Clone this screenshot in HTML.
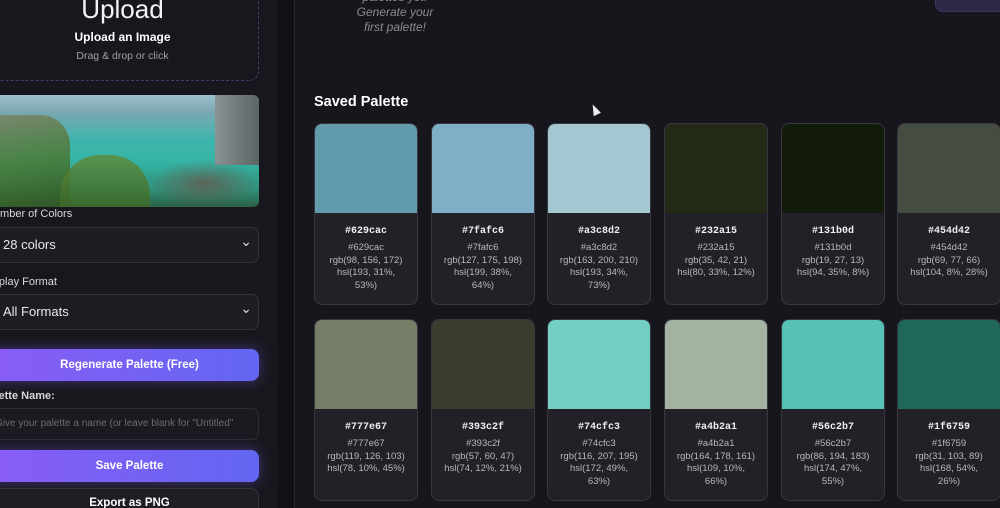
<!DOCTYPE html>
<html style="width:1000px;height:508px;overflow:hidden"><head><meta charset="utf-8"><style>
*{box-sizing:border-box;margin:0;padding:0}
body{width:1000px;height:508px;overflow:hidden;background:#17161c;font-family:"Liberation Sans",sans-serif;color:#fff;position:relative}
.a{position:absolute}
.left{left:0;top:0;width:278px;height:508px;background:#18171d}
.strip{left:278px;top:0;width:17px;height:508px;background:#111014;border-right:1px solid #26252c}
.up{left:-20px;top:-20px;width:279px;height:101px;border:1.5px dashed #4a3a6a;border-radius:10px}
.sel{left:-20px;width:279px;height:36px;background:#1e1d24;border:1px solid #34333b;border-radius:7px;font-size:13px;color:#e8e8ec;padding-left:22px;line-height:34px}
.sel:after{content:"⌄";position:absolute;right:6px;top:-4px;font-size:14px;color:#ddd}
.lbl{font-size:11px;color:#d8d8dc;left:-14px}
.btn{left:-20px;width:279px;height:32px;border-radius:8px;background:linear-gradient(90deg,#8b5cf6,#6366f1);font-size:11.5px;font-weight:bold;text-align:center;line-height:32px;padding-left:20px;box-shadow:0 0 14px rgba(120,90,240,.45)}
.card{width:104px;height:182px;border:1px solid #38373f;border-radius:8px;background:#222127;overflow:hidden;text-align:center}
.sw{height:89px}
.hx{font-family:"Liberation Mono",monospace;font-weight:bold;font-size:10px;margin-top:13px;color:#f0f0f0}
.dt{font-size:9.5px;color:#b8b8bc;line-height:12.5px;margin-top:5px;padding:0 6px}
</style></head><body>
<div class="a left"></div>
<div class="a strip"></div>
<div class="a up"></div>
<div class="a" style="left:0;width:245px;text-align:center;top:-6px;font-size:26px;color:#f4f4f6">Upload</div>
<div class="a" style="left:0;width:245px;text-align:center;top:30px;font-size:12px;font-weight:bold">Upload an Image</div>
<div class="a" style="left:0;width:245px;text-align:center;top:50px;font-size:10.5px;color:#a0a0a8">Drag &amp; drop or click</div>
<div class="a" style="left:0;top:95px;width:259px;height:112px;border-radius:0 6px 6px 0;overflow:hidden;background:linear-gradient(180deg,#9cc0cc 0%,#7aa7b2 15%,#3fb5ad 40%,#35b3a4 60%,#2f8f78 85%,#2c6046 100%)">
<div class="a" style="left:0;top:20px;width:70px;height:92px;background:linear-gradient(170deg,#7a8060,#4a7a34 50%,#2e5420);border-radius:0 30px 0 0;opacity:.85"></div>
<div class="a" style="left:60px;top:60px;width:90px;height:52px;background:linear-gradient(180deg,#5f8a3a,#3d6a28);border-radius:40px 40px 0 0;opacity:.8"></div>
<div class="a" style="left:215px;top:0;width:44px;height:70px;background:linear-gradient(90deg,#8a9496,#5a6464)"></div>
<div class="a" style="left:150px;top:65px;width:109px;height:47px;background:radial-gradient(ellipse at 50% 50%,rgba(110,80,70,.7) 0%,rgba(40,120,100,0) 70%)"></div>
</div>
<div class="a lbl" style="top:208px">Number of Colors</div>
<div class="a sel" style="top:227px">28 colors</div>
<div class="a lbl" style="top:276px;left:-17px">Display Format</div>
<div class="a sel" style="top:294px">All Formats</div>
<div class="a btn" style="top:349px">Regenerate Palette (Free)</div>
<div class="a lbl" style="top:390px;left:-18px;font-weight:bold">Palette Name:</div>
<div class="a" style="left:-20px;top:408px;width:279px;height:32px;background:#1b1a20;border:1px solid #2e2d35;border-radius:7px;font-size:10px;color:#6c6b74;line-height:30px;padding-left:14px;white-space:nowrap;overflow:hidden">Give your palette a name (or leave blank for "Untitled"</div>
<div class="a btn" style="top:450px">Save Palette</div>
<div class="a" style="left:-20px;top:488px;width:279px;height:32px;background:#1f1e24;border:1px solid #34333b;border-radius:8px;font-size:11.5px;font-weight:bold;text-align:center;line-height:28px;padding-left:20px">Export as PNG</div>

<div class="a" style="left:340px;top:-10px;width:110px;text-align:center;font-size:12px;font-style:italic;color:#8a8a92;line-height:15px">palettes yet.<br>Generate your<br>first palette!</div>
<div class="a" style="left:935px;top:-10px;width:80px;height:22px;border-radius:8px;background:#2c2747;border:1px solid #3d3566"></div>
<div class="a" style="left:314px;top:94px;font-size:14.5px;font-weight:bold">Saved Palette</div>
<div class="a" style="left:591px;top:104px;width:0;height:0;border-left:4px solid transparent;border-right:4px solid transparent;border-bottom:11px solid #eee;transform:rotate(-25deg)"></div>

<div class="a card" style="left:314px;top:123px"><div class="sw" style="background:#629cac"></div><div class="hx">#629cac</div><div class="dt">#629cac<br>rgb(98, 156, 172)<br>hsl(193, 31%,<br>53%)</div></div>
<div class="a card" style="left:431px;top:123px"><div class="sw" style="background:#7fafc6"></div><div class="hx">#7fafc6</div><div class="dt">#7fafc6<br>rgb(127, 175, 198)<br>hsl(199, 38%,<br>64%)</div></div>
<div class="a card" style="left:547px;top:123px"><div class="sw" style="background:#a3c8d2"></div><div class="hx">#a3c8d2</div><div class="dt">#a3c8d2<br>rgb(163, 200, 210)<br>hsl(193, 34%,<br>73%)</div></div>
<div class="a card" style="left:664px;top:123px"><div class="sw" style="background:#232a15"></div><div class="hx">#232a15</div><div class="dt">#232a15<br>rgb(35, 42, 21)<br>hsl(80, 33%, 12%)</div></div>
<div class="a card" style="left:781px;top:123px"><div class="sw" style="background:#131b0d"></div><div class="hx">#131b0d</div><div class="dt">#131b0d<br>rgb(19, 27, 13)<br>hsl(94, 35%, 8%)</div></div>
<div class="a card" style="left:897px;top:123px"><div class="sw" style="background:#454d42"></div><div class="hx">#454d42</div><div class="dt">#454d42<br>rgb(69, 77, 66)<br>hsl(104, 8%, 28%)</div></div>

<div class="a card" style="left:314px;top:319px"><div class="sw" style="background:#777e67"></div><div class="hx">#777e67</div><div class="dt">#777e67<br>rgb(119, 126, 103)<br>hsl(78, 10%, 45%)</div></div>
<div class="a card" style="left:431px;top:319px"><div class="sw" style="background:#393c2f"></div><div class="hx">#393c2f</div><div class="dt">#393c2f<br>rgb(57, 60, 47)<br>hsl(74, 12%, 21%)</div></div>
<div class="a card" style="left:547px;top:319px"><div class="sw" style="background:#74cfc3"></div><div class="hx">#74cfc3</div><div class="dt">#74cfc3<br>rgb(116, 207, 195)<br>hsl(172, 49%,<br>63%)</div></div>
<div class="a card" style="left:664px;top:319px"><div class="sw" style="background:#a4b2a1"></div><div class="hx">#a4b2a1</div><div class="dt">#a4b2a1<br>rgb(164, 178, 161)<br>hsl(109, 10%,<br>66%)</div></div>
<div class="a card" style="left:781px;top:319px"><div class="sw" style="background:#56c2b7"></div><div class="hx">#56c2b7</div><div class="dt">#56c2b7<br>rgb(86, 194, 183)<br>hsl(174, 47%,<br>55%)</div></div>
<div class="a card" style="left:897px;top:319px"><div class="sw" style="background:#1f6759"></div><div class="hx">#1f6759</div><div class="dt">#1f6759<br>rgb(31, 103, 89)<br>hsl(168, 54%,<br>26%)</div></div>
</body></html>
